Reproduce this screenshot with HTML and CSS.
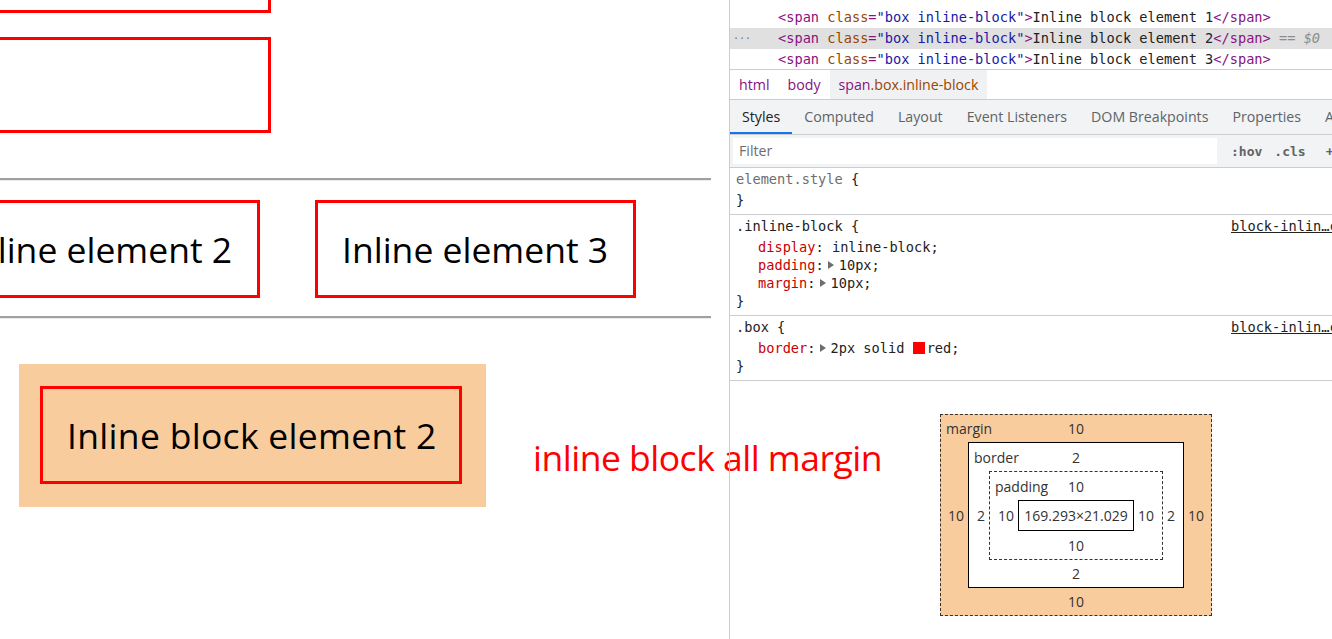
FILE: index.html
```html
<!DOCTYPE html>
<html>
<head>
<meta charset="utf-8">
<link rel="stylesheet" href="styles.css">
</head>
<body>
<div class="page">
  <main class="left">
    <div class="block block-first"></div>
    <div class="block block-second"></div>
    <div class="rule"></div>
    <div class="inline-row">
      <span class="box">Inline element 2</span>
      <span class="box">Inline element 3</span>
    </div>
    <div class="rule rule-second"></div>
    <div class="ib-row">
      <div class="margin-wrap"><span class="box ib-box">Inline block element 2</span></div>
      <span class="note">inline block all margin</span>
    </div>
  </main>

  <aside class="devtools">
    <div class="dom">
      <div class="dom-line"><span class="dots"></span><span class="tag">&lt;span</span> <span class="attr">class</span><span class="tag">=</span><span class="val">"box inline-block"</span><span class="tag">&gt;</span>Inline block element 1<span class="tag">&lt;/span&gt;</span></div>
      <div class="dom-line sel"><span class="dots">&middot;&middot;&middot;</span><span class="tag">&lt;span</span> <span class="attr">class</span><span class="tag">=</span><span class="val">"box inline-block"</span><span class="tag">&gt;</span>Inline block element 2<span class="tag">&lt;/span&gt;</span> <span class="dollar">== $0</span></div>
      <div class="dom-line"><span class="dots"></span><span class="tag">&lt;span</span> <span class="attr">class</span><span class="tag">=</span><span class="val">"box inline-block"</span><span class="tag">&gt;</span>Inline block element 3<span class="tag">&lt;/span&gt;</span></div>
    </div>

    <nav class="crumbs">
      <span class="crumb"><span class="c-tag">html</span></span>
      <span class="crumb"><span class="c-tag">body</span></span>
      <span class="crumb crumb-sel"><span class="c-tag">span</span><span class="c-cls">.box.inline-block</span></span>
    </nav>

    <div class="tabs">
      <span class="tab active">Styles</span>
      <span class="tab">Computed</span>
      <span class="tab">Layout</span>
      <span class="tab">Event Listeners</span>
      <span class="tab">DOM Breakpoints</span>
      <span class="tab">Properties</span>
      <span class="tab">Accessibility</span>
    </div>

    <div class="filter-row">
      <div class="filter">Filter</div>
      <span class="tool">:hov</span>
      <span class="tool">.cls</span>
      <span class="tool tool-plus">+</span>
    </div>

    <section class="rule-sec">
      <div class="sel-line"><span><span class="elstyle">element.style</span> {</span></div>
      <div class="brace">}</div>
    </section>

    <section class="rule-sec">
      <div class="sel-line"><span>.inline-block {</span><span class="src">block-inlin…css:16</span></div>
      <div class="prop"><span class="pn">display</span>: inline-block;</div>
      <div class="prop"><span class="pn">padding</span>:<span class="tri"></span>10px;</div>
      <div class="prop"><span class="pn">margin</span>:<span class="tri"></span>10px;</div>
      <div class="brace">}</div>
    </section>

    <section class="rule-sec">
      <div class="sel-line"><span>.box {</span><span class="src">block-inlin…css:1</span></div>
      <div class="prop"><span class="pn">border</span>:<span class="tri"></span>2px solid <span class="swatch"></span>red;</div>
      <div class="brace">}</div>
    </section>

    <div class="boxmodel">
      <div class="bm bm-margin">
        <div class="bm-top"><span class="bm-label">margin</span><span>10</span><span></span></div>
        <div class="bm-l">10</div>
        <div class="bm bm-border">
          <div class="bm-top"><span class="bm-label">border</span><span>2</span><span></span></div>
          <div class="bm-l">2</div>
          <div class="bm bm-padding">
            <div class="bm-top"><span class="bm-label">padding</span><span>10</span><span></span></div>
            <div class="bm-l">10</div>
            <div class="bm-content">169.293×21.029</div>
            <div class="bm-r">10</div>
            <div class="bm-bottom">10</div>
          </div>
          <div class="bm-r">2</div>
          <div class="bm-bottom">2</div>
        </div>
        <div class="bm-r">10</div>
        <div class="bm-bottom">10</div>
      </div>
    </div>
  </aside>
</div>
</body>
</html>
```
FILE: styles.css
```css
* { box-sizing: border-box; }
html, body { margin: 0; padding: 0; background: #fff; }
body { width: 1332px; height: 639px; overflow: hidden; }

.page { display: flex; width: 1332px; height: 639px; overflow: hidden; }

/* ---------- left page ---------- */
.left {
  flex: none;
  width: 729px;
  height: 639px;
  font-family: "Open Sans", "Noto Sans", sans-serif;
  font-size: 35.5px;
  color: #000;
}
.block {
  border: 3px solid red;
  width: 372px;
  height: 96px;
  margin-left: -101px;
}
.block-first { margin-top: -83px; }
.block-second { margin-top: 24px; }

.rule {
  width: 711px;
  margin-top: 45px;
  border-top: 2px solid #a0a0a0;
  border-bottom: 1px solid #ebebeb;
}
.rule-second { margin-top: 18px; }

.inline-row {
  display: flex;
  gap: 55px;
  margin-top: 19px;
  margin-left: -61px;
}
.box {
  display: block;
  flex: none;
  border: 3px solid red;
  width: 321px;
  height: 98px;
  padding: 0 24px;
  line-height: 92px;
  white-space: nowrap;
}

.ib-row {
  display: flex;
  align-items: flex-start;
  margin-top: 45px;
  margin-left: 19px;
}
.margin-wrap {
  flex: none;
  width: 467px;
  height: 143px;
  padding: 22px 24px 23px 21px;
  background: #f9cc9d;
}
.ib-box { width: 422px; letter-spacing: 0.3px; }
.note {
  flex: none;
  margin-left: 47px;
  margin-top: 71px;
  color: red;
  line-height: 44px;
  letter-spacing: -0.5px;
  white-space: nowrap;
}

/* ---------- devtools ---------- */
.devtools {
  flex: none;
  width: 693px;
  height: 639px;
  border-left: 1px solid #cbcdd1;
  font-family: "Open Sans", "Noto Sans", sans-serif;
  font-size: 14.2px;
  color: #303942;
}

.dom {
  padding-top: 7px;
  height: 70px;
  border-bottom: 1px solid #cbcdd1;
  background: #fff;
  font-family: "DejaVu Sans Mono", "Liberation Mono", monospace;
  font-size: 13.65px;
  color: #222;
}
.dom-line {
  height: 21px;
  line-height: 21px;
  white-space: pre;
}
.dom-line.sel { background: #e0e0e0; }
.dots {
  display: inline-block;
  width: 48px;
  padding-left: 3px;
  color: #777;
  font-size: 10px;
  vertical-align: top;
}
.tag { color: #881280; }
.attr { color: #994500; }
.val { color: #1a1aa6; }
.dollar { color: #8c8c8c; font-style: italic; }

.crumbs {
  display: flex;
  height: 30px;
  border-bottom: 1px solid #cbcdd1;
  background: #fff;
}
.crumb {
  display: flex;
  align-items: center;
  padding: 0 9px;
  white-space: nowrap;
}
.crumb-sel { background: #f0f1f2; }
.c-tag { color: #881280; }
.c-cls { color: #994500; }

.tabs {
  display: flex;
  height: 35px;
  background: #f1f3f4;
  border-bottom: 1px solid #cbcdd1;
  white-space: nowrap;
}
.tab {
  display: flex;
  align-items: center;
  padding: 0 12px;
  color: #5f6368;
  border-bottom: 2px solid transparent;
}
.tab.active {
  color: #202124;
  border-bottom-color: #1a73e8;
}

.filter-row {
  display: flex;
  align-items: center;
  height: 33px;
  padding: 0 0 0 3px;
  background: #f1f3f4;
  border-bottom: 1px solid #cbcdd1;
  white-space: nowrap;
}
.filter {
  width: 484px;
  height: 26px;
  background: #fff;
  padding-left: 6px;
  line-height: 26px;
  color: #6d6d6d;
  margin-right: 14px;
}
.tool {
  font-family: "DejaVu Sans Mono", monospace;
  font-weight: bold;
  font-size: 13px;
  color: #5f6368;
  margin-right: 12px;
}
.tool-plus { margin-left: 8px; }

.rule-sec {
  padding: 2px 0 5px 6px;
  border-bottom: 1px solid #cbcdd1;
  font-family: "DejaVu Sans Mono", "Liberation Mono", monospace;
  font-size: 13.65px;
  color: #222;
}
.sel-line {
  display: grid;
  grid-template-columns: 495px auto;
  height: 18px;
  line-height: 18px;
  margin-bottom: 3px;
  white-space: pre;
}
.elstyle { color: #6e6e6e; }
.src {
  color: #222;
  text-decoration: underline;
  white-space: nowrap;
}
.prop, .brace {
  height: 18px;
  line-height: 18px;
  white-space: pre;
}
.prop { padding-left: 22px; }
.pn { color: #c80000; }
.tri {
  display: inline-block;
  width: 0; height: 0;
  margin: 0 5px 1px 4px;
  border-top: 4px solid transparent;
  border-bottom: 4px solid transparent;
  border-left: 6px solid #6e6e6e;
}
.swatch {
  display: inline-block;
  width: 12px;
  height: 12px;
  background: red;
  margin: 0 2px -1px 0;
}

/* box model */
.boxmodel {
  display: flex;
  justify-content: center;
  padding-top: 33px;
  font-family: "Open Sans", "Noto Sans", sans-serif;
  font-size: 14px;
  color: #333;
}
.bm {
  display: grid;
  align-items: center;
  justify-items: center;
}
.bm-top {
  grid-column: 1 / -1;
  align-self: stretch;
  justify-self: stretch;
  display: grid;
  grid-template-columns: 1fr auto 1fr;
  align-items: center;
}
.bm-label { justify-self: start; padding-left: 5px; }
.bm-l { justify-self: end; padding-right: 4px; }
.bm-r { justify-self: start; padding-left: 4px; }
.bm-bottom {
  grid-column: 1 / -1;
  align-self: stretch;
  display: flex;
  align-items: center;
  justify-content: center;
}
.bm-margin {
  grid-template-columns: 27px auto 27px;
  grid-template-rows: 27px auto 27px;
  border: 1px dashed #333;
  background: #f9cc9d;
}
.bm-border {
  grid-template-columns: 20px auto 20px;
  grid-template-rows: 28px auto 27px;
  border: 1px solid #000;
  background: #fff;
}
.bm-padding {
  grid-template-columns: 28px auto 28px;
  grid-template-rows: 28px auto 28px;
  border: 1px dashed #333;
}
.bm-content {
  width: 116px;
  height: 31px;
  border: 1px solid #000;
  display: flex;
  align-items: center;
  justify-content: center;
  white-space: nowrap;
}
```
